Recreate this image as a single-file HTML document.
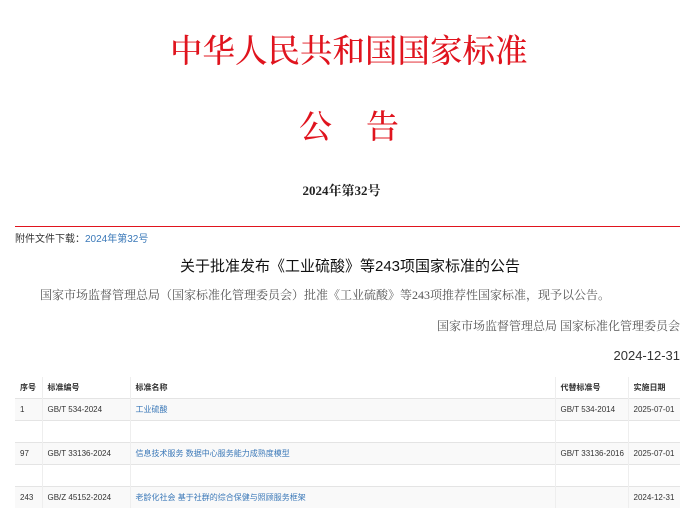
<!DOCTYPE html>
<html><head><meta charset="utf-8"><style>
body{margin:0;width:683px;height:507px;overflow:hidden;background:#fff;font-family:"Liberation Sans","Noto Sans CJK SC",sans-serif;position:relative}
.a{position:absolute;white-space:nowrap}
.red{color:#e0141e;font-family:"Liberation Serif","Noto Serif CJK SC",serif;font-weight:500}
table{position:absolute;left:15px;top:377px;width:665px;border-collapse:collapse;font-size:8px;color:#333}
td{border-top:1px solid #e4e4e4;height:21px;padding:0 0 0 5px}
tr.g td{background:#f9f9f9}
th{text-align:left;font-weight:bold;height:21px;padding:0 0 0 5px;font-size:8px}
td+td,th+th{border-left:1px solid #eee}
a{color:#3a78b8;text-decoration:none}
</style></head><body>
<div class="a red" style="left:170px;top:26px;font-size:32.5px">中华人民共和国国家标准</div>
<div class="a red" style="left:299px;top:101px;font-size:33px">公</div>
<div class="a red" style="left:366px;top:101px;font-size:33px">告</div>
<div class="a" style="left:0;width:683px;text-align:center;top:180px;font-size:13px;font-weight:bold;font-family:'Liberation Serif','Noto Serif CJK SC',serif;color:#222">2024年第32号</div>
<div class="a" style="left:15px;top:226px;width:665px;height:1px;background:#e0141e"></div>
<div class="a" style="left:15px;top:230px;font-size:10px;color:#333">附件文件下载：<a>2024年第32号</a></div>
<div class="a" style="left:180px;top:255px;font-size:15px;color:#111">关于批准发布《工业硫酸》等243项国家标准的公告</div>
<div class="a" style="left:40px;top:286px;font-size:12px;color:#555;font-family:'Liberation Serif','Noto Serif CJK SC',serif">国家市场监督管理总局（国家标准化管理委员会）批准《工业硫酸》等243项推荐性国家标准，现予以公告。</div>
<div class="a" style="right:3px;top:317px;font-size:12px;color:#555;font-family:'Liberation Serif','Noto Serif CJK SC',serif">国家市场监督管理总局 国家标准化管理委员会</div>
<div class="a" style="right:3px;top:348px;font-size:13px;color:#333">2024-12-31</div>
<table>
<colgroup><col style="width:27px"><col style="width:88px"><col style="width:425px"><col style="width:73px"><col></colgroup>
<tr><th>序号</th><th>标准编号</th><th>标准名称</th><th>代替标准号</th><th>实施日期</th></tr>
<tr class="g"><td>1</td><td>GB/T 534-2024</td><td><a>工业硫酸</a></td><td>GB/T 534-2014</td><td>2025-07-01</td></tr>
<tr><td></td><td></td><td></td><td></td><td></td></tr>
<tr class="g"><td>97</td><td>GB/T 33136-2024</td><td><a>信息技术服务 数据中心服务能力成熟度模型</a></td><td>GB/T 33136-2016</td><td>2025-07-01</td></tr>
<tr><td></td><td></td><td></td><td></td><td></td></tr>
<tr class="g"><td>243</td><td>GB/Z 45152-2024</td><td><a>老龄化社会 基于社群的综合保健与照顾服务框架</a></td><td></td><td>2024-12-31</td></tr>
</table>
</body></html>
